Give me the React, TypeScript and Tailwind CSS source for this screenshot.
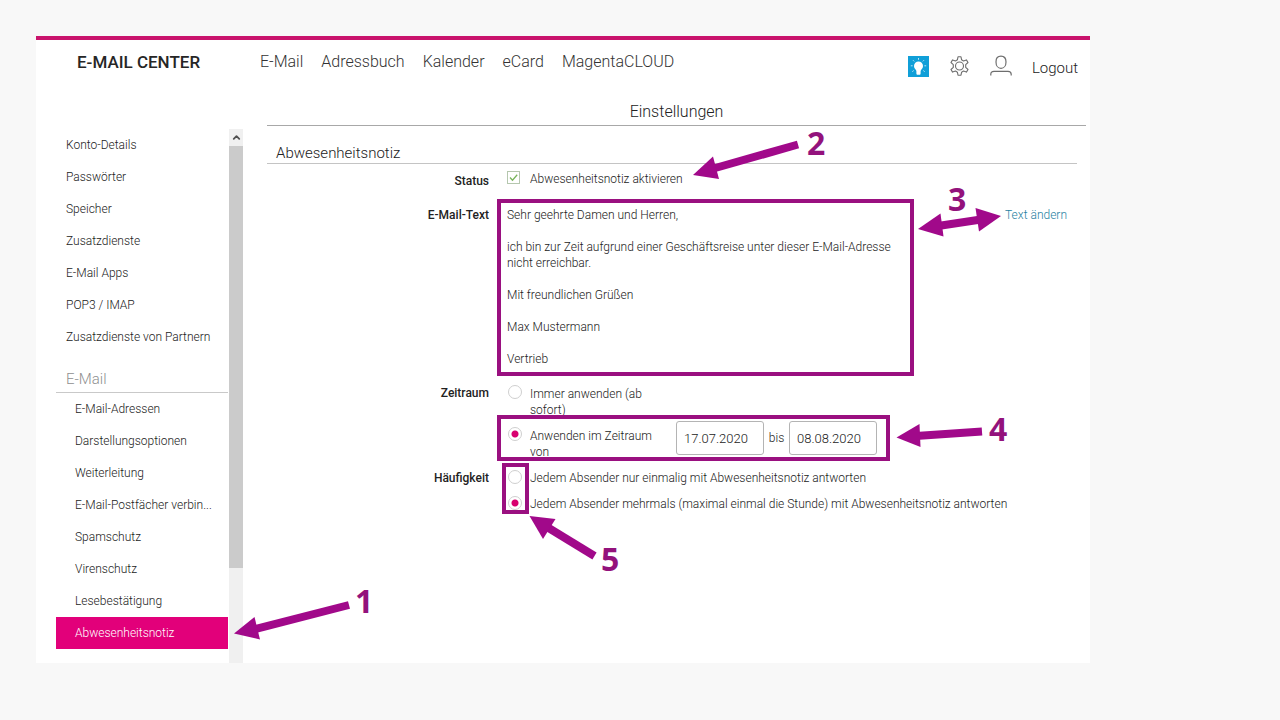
import { ChevronUp } from "lucide-react";

const navItems = ["E-Mail", "Adressbuch", "Kalender", "eCard", "MagentaCLOUD"];

const accountItems = [
  "Konto-Details",
  "Passwörter",
  "Speicher",
  "Zusatzdienste",
  "E-Mail Apps",
  "POP3 / IMAP",
  "Zusatzdienste von Partnern",
];

const mailItems = [
  "E-Mail-Adressen",
  "Darstellungsoptionen",
  "Weiterleitung",
  "E-Mail-Postfächer verbin...",
  "Spamschutz",
  "Virenschutz",
  "Lesebestätigung",
  "Abwesenheitsnotiz",
];

const mailText = `Sehr geehrte Damen und Herren,

ich bin zur Zeit aufgrund einer Geschäftsreise unter dieser E-Mail-Adresse
nicht erreichbar.

Mit freundlichen Grüßen

Max Mustermann

Vertrieb`;

const radioClass =
  "appearance-none shrink-0 w-[14px] h-[14px] rounded-full border border-[#cfcfcf] bg-white checked:bg-[radial-gradient(circle,#d8006f_0_3px,#ffffff_4px)]";

function Header() {
  return (
    <header className="flex items-start h-[60px] pl-[41px] pr-3 text-[#333333]">
      <div className="w-[183px] shrink-0 pt-[10px] text-[17px] leading-6 font-medium text-[#262626]">
        E-MAIL CENTER
      </div>
      <nav className="flex gap-[18px] pt-[10px] text-[16px] leading-6 font-light">
        {navItems.map((item) => (
          <a key={item} href="#">
            {item}
          </a>
        ))}
      </nav>
      <div className="flex items-center gap-5 ml-auto pt-3">
        <button type="button" aria-label="Hinweise">
          <svg width="21" height="21" viewBox="0 0 21 21">
            <rect width="21" height="21" fill="#109fd8" />
            <path
              d="M10.5 5.500a4.500 4.500 0 0 0-4.500 4.500c0 1.800 1 2.800 1.900 3.900.4.5.5 1 .5 1.600v1.900c0 .8.5 1.300 1.200 1.300h1.800c.7 0 1.200-.5 1.200-1.300v-1.900c0-.6.1-1.100.5-1.600.9-1.100 1.900-2.100 1.900-3.900a4.500 4.500 0 0 0-4.500-4.500z"
              fill="#fff"
            />
            <path
              d="M10.5 2v1.8M5 4.2l1.2 1.2M16 4.2l-1.2 1.2M2.8 9.8h1.8M16.4 9.8h1.8M4.3 15.6l1.4-1M16.7 15.6l-1.4-1"
              stroke="#b9e4f6"
              strokeWidth="1"
              fill="none"
            />
          </svg>
        </button>
        <button type="button" aria-label="Einstellungen">
          <svg width="21" height="21" viewBox="0 0 21 21" fill="none" stroke="#6e6e6e" strokeWidth="1.1" strokeLinejoin="round">
            <path d="M9 .8h3l.6 3 1.9 1.1 2.9-1 1.6 2.6-2.3 2.1v2.8l2.3 2.1-1.6 2.6-2.9-1-1.9 1.1-.6 3H9l-.6-3-1.9-1.1-2.900 1L2 13.500l2.300-2.100V8.600L2 6.500l1.600-2.600 2.900 1 1.900-1.100z" />
            <circle cx="10.500" cy="10" r="4" />
          </svg>
        </button>
        <button type="button" aria-label="Profil">
          <svg width="22" height="22" viewBox="0 0 22 22" fill="none" stroke="#6e6e6e" strokeWidth="1.2">
            <path d="M11 1.200c-3.200 0-5 2.200-5 5.700 0 3.600 2 6.500 5 6.500s5-2.900 5-6.500c0-3.500-1.800-5.700-5-5.700z" />
            <path d="M.8 20.500v-1.200c0-1.800 1.300-2.900 3.200-2.900h14c1.900 0 3.200 1.100 3.200 2.900v1.200" />
          </svg>
        </button>
        <a href="#" className="pt-1 text-[15px] leading-6 font-light text-[#222222]">
          Logout
        </a>
      </div>
    </header>
  );
}

function Sidebar() {
  return (
    <aside className="flex shrink-0 pl-5 pt-[29px]">
      <nav className="w-[172px] pb-[14px]">
        {accountItems.map((item) => (
          <a key={item} href="#" className="block h-8 pl-[10px] leading-8 whitespace-nowrap">
            {item}
          </a>
        ))}
        <h2 className="h-10 pl-[10px] pt-[14px] border-b border-[#c9c9c9] text-[15px] leading-6 text-[#8f8f8f]">
          E-Mail
        </h2>
        {mailItems.map((item) => (
          <a
            key={item}
            href="#"
            className={
              item === "Abwesenheitsnotiz"
                ? "block h-8 pl-[19px] leading-8 whitespace-nowrap bg-[#e2007a] text-white"
                : "block h-8 pl-[19px] leading-8 whitespace-nowrap"
            }
          >
            {item}
          </a>
        ))}
      </nav>
      {/* Scrollbar */}
      <div className="ml-px w-[14px] bg-[#f0f0f0]">
        <button type="button" aria-label="Nach oben" className="flex items-center justify-center w-full h-[17px]">
          <ChevronUp size={11} strokeWidth={4} color="#505050" />
        </button>
        <div className="h-[422px] bg-[#cbcbcb]" />
      </div>
    </aside>
  );
}

function Settings() {
  return (
    <main className="flex-1 min-w-0 ml-6 mr-1">
      <h1 className="h-[26px] border-b border-[#a8a8a8] text-center text-[16px] leading-6 font-light">
        Einstellungen
      </h1>
      <h2 className="h-[38px] mr-[9px] pl-[9px] pt-[15px] border-b border-[#c4c4c4] text-[15px] leading-6 font-light">
        Abwesenheitsnotiz
      </h2>

      <form className="grid grid-cols-[222px_1fr] gap-x-[18px] pt-[7px] leading-4">
        <div className="h-9 pt-[2px] text-right font-medium">Status</div>
        <label className="flex items-start h-9 gap-[10px]">
          <span className="relative flex w-[13px] h-[13px]">
            <input
              type="checkbox"
              defaultChecked
              className="appearance-none w-[13px] h-[13px] border border-[#b5c7ae] bg-white"
            />
            <svg className="absolute inset-0" width="13" height="13" viewBox="0 0 13 13" fill="none">
              <path d="M3 6.500l2.500 2.700L10.200 3.800" stroke="#7ab55c" strokeWidth="1.300" />
            </svg>
          </span>
          Abwesenheitsnotiz aktivieren
        </label>

        <div className="text-right font-medium">E-Mail-Text</div>
        <div className="flex justify-between h-[178px] pr-[19px]">
          <p className="whitespace-pre">{mailText}</p>
          <a href="#" className="text-[#1f7fa2]">
            Text ändern
          </a>
        </div>

        <div className="text-right font-medium">Zeitraum</div>
        <div className="h-[85px]">
          <label className="flex items-start h-[42px] gap-2 pl-px">
            <input type="radio" name="zeitraum" className={radioClass} />
            <span className="w-[130px] pt-px">Immer anwenden (ab sofort)</span>
          </label>
          <div className="flex items-start">
            <label className="flex items-start gap-2 pl-px">
              <input type="radio" name="zeitraum" defaultChecked className={radioClass} />
              <span className="w-[146px] pt-px">
                Anwenden im Zeitraum
                <br />
                von
              </span>
            </label>
            <div className="flex items-center -mt-[6px]">
              <input
                type="text"
                aria-label="von"
                defaultValue="17.07.2020"
                className="w-[88px] h-[34px] px-[7px] border border-[#b4b4b4] rounded-[3px] bg-white text-[13px]"
              />
              <span className="w-[25px] text-center">bis</span>
              <input
                type="text"
                aria-label="bis"
                defaultValue="08.08.2020"
                className="w-[88px] h-[34px] px-[7px] border border-[#b4b4b4] rounded-[3px] bg-white text-[13px]"
              />
            </div>
          </div>
        </div>

        <div className="text-right font-medium">Häufigkeit</div>
        <div className="flex flex-col gap-[10px]">
          <label className="flex items-start gap-2 pl-px whitespace-nowrap">
            <input type="radio" name="haeufigkeit" className={radioClass} />
            <span>Jedem Absender nur einmalig mit Abwesenheitsnotiz antworten</span>
          </label>
          <label className="flex items-start gap-2 pl-px whitespace-nowrap">
            <input type="radio" name="haeufigkeit" defaultChecked className={radioClass} />
            <span>Jedem Absender mehrmals (maximal einmal die Stunde) mit Abwesenheitsnotiz antworten</span>
          </label>
        </div>
      </form>
    </main>
  );
}

// Numbered markers with arrows and frames, drawn over the settings
function Callouts() {
  return (
    <svg
      className="absolute left-0 top-0 pointer-events-none"
      width="1054"
      height="627"
      viewBox="36 36 1054 627"
      aria-hidden="true"
    >
      <g fill="none" stroke="#9a1080" strokeWidth="4">
        <rect x="499" y="201" width="413" height="173" />
        <rect x="499" y="417" width="389" height="42" />
        <rect x="504" y="465" width="23" height="47" />
      </g>
      <g stroke="#a1098a" strokeWidth="8">
        <path d="M349 605L254 629.500" />
        <path d="M798 144.500L710 169.500" />
        <path d="M938 226L981 219.500" />
        <path d="M982 431.500L916 436" />
        <path d="M594.500 556L547 527" />
      </g>
      <g fill="#a1098a">
        <path d="M234 633.500L254.500 617L260 639.500z" />
        <path d="M693 175L713 156.500L719 179z" />
        <path d="M918 229L940.500 213.500L943.500 236.500z" />
        <path d="M1001 216L975.500 208L979 231.500z" />
        <path d="M896.500 437.500L919.500 424L920.500 447z" />
        <path d="M529.500 516L555.500 519L543 539z" />
      </g>
      <g fill="#93127c" className="font-['Open_Sans',sans-serif] text-[32px] font-bold">
        <text x="355" y="613">1</text>
        <text x="807" y="155">2</text>
        <text x="948" y="211">3</text>
        <text x="989" y="441">4</text>
        <text x="601" y="571">5</text>
      </g>
    </svg>
  );
}

export default function App() {
  return (
    <div className="min-h-screen bg-[#f8f8f8] pt-9 pl-9 pr-[190px] font-[Roboto,sans-serif] text-[12px] font-light text-[#222222]">
      <div className="relative bg-white border-t-4 border-[#c9136c]">
        <Header />
        <div className="flex items-stretch">
          <Sidebar />
          <Settings />
        </div>
        <div className="absolute -top-1 left-0">
          <Callouts />
        </div>
      </div>
    </div>
  );
}
